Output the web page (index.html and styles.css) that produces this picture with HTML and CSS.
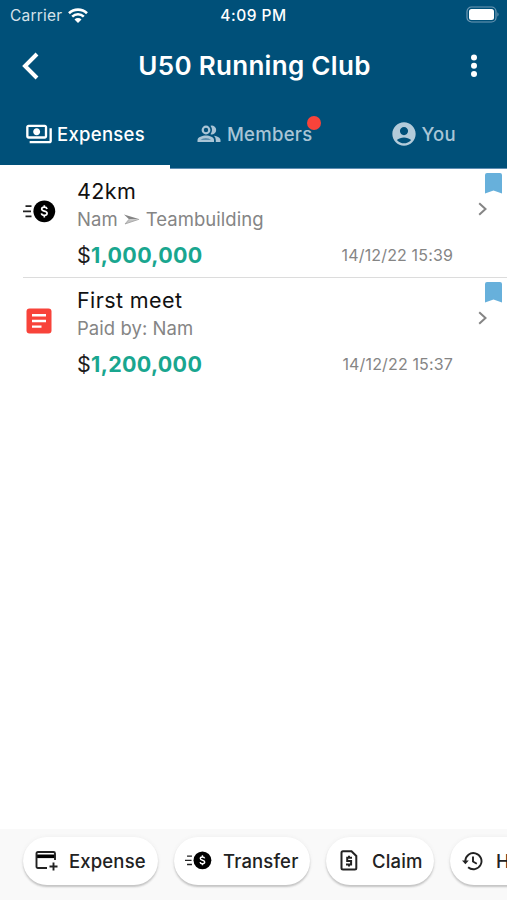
FILE: index.html
```html
<!DOCTYPE html>
<html lang="en">
<head>
  <meta charset="UTF-8">
  <meta name="viewport" content="width=device-width, initial-scale=1">
  <title>U50 Running Club</title>
  <link rel="stylesheet" href="styles.css">
</head>
<body>

  <!-- shared icons -->
  <svg class="defs" width="0" height="0">
    <symbol id="transfer" viewBox="0 0 33 23">
      <path d="M2.5 6.2h6M0 11.3h8M2.5 16.4h6" fill="none" stroke="#222" stroke-width="1.7"/>
      <circle cx="21.3" cy="11.3" r="10.9" fill="#000"/>
      <path d="M24.1 8.9c-.4-1.2-1.4-1.7-2.8-1.7-1.5 0-2.6.7-2.6 1.9 0 2.9 5.4 1.2 5.4 4.2 0 1.300-1.200 2.100-2.800 2.100s-2.600-.7-2.900-2M21.300 5.200v2M21.300 15.400v2" fill="none" stroke="#fff" stroke-width="1.7"/>
    </symbol>
    <symbol id="bookmark" viewBox="0 0 17 21">
      <path d="M2 0h13q2 0 2 2v18.500l-8.500-3L0 20.500V2q0-2 2-2z" fill="#67b0db"/>
    </symbol>
    <symbol id="chevron" viewBox="0 0 9 14">
      <path d="M1.200 1.200L7.500 7l-6.300 5.800" fill="none" stroke="#858585" stroke-width="2"/>
    </symbol>
  </svg>

  <header>
    <div class="status">
      <div class="carrier">Carrier
        <svg width="20" height="15" viewBox="0 0 20 15" fill="none" stroke="#fff" stroke-width="2.6">
          <path d="M1 5.200a13 13 0 0 1 18 0M4.200 8.600a8.400 8.400 0 0 1 11.600 0"/>
          <path d="M10 15l-3.500-3.600a5 5 0 0 1 7 0z" fill="#fff" stroke="none"/>
        </svg>
      </div>
      <div class="clock">4:09 PM</div>
      <svg class="battery" width="34" height="17" viewBox="0 0 34 17">
        <rect x="1" y="1" width="29" height="15" rx="4.5" fill="none" stroke="#6f9ab5" stroke-width="1.2"/>
        <rect x="3" y="3" width="25" height="11" rx="2.5" fill="#fff"/>
        <path d="M31.500 6.300q2 2.200 0 4.400z" fill="#7fa5bd"/>
      </svg>
    </div>
    <div class="title">
      <svg width="17" height="28" viewBox="0 0 17 28"><path d="M15 2L3 14l12 12" fill="none" stroke="#fff" stroke-width="4"/></svg>
      <h1>U50 Running Club</h1>
      <svg width="8" height="24" viewBox="0 0 8 24" fill="#fff"><circle cx="4" cy="3.500" r="3"/><circle cx="4" cy="11.700" r="3"/><circle cx="4" cy="19.900" r="3"/></svg>
    </div>
    <nav>
      <div class="tab active">
        <svg width="28" height="28" viewBox="0 0 24 24" fill="#fff"><path d="M19 14V6c0-1.100-.9-2-2-2H3c-1.100 0-2 .9-2 2v8c0 1.100.9 2 2 2h14c1.100 0 2-.9 2-2zm-2 0H3V6h14v8zm-7-7c-1.660 0-3 1.340-3 3s1.340 3 3 3 3-1.340 3-3-1.340-3-3-3zm13 0v11c0 1.100-.9 2-2 2H4v-2h17V7h2z"/></svg>
        <span>Expenses</span>
      </div>
      <div class="tab members">
        <svg width="24" height="18" viewBox="0 0 24 18" fill="#a9c5d6">
          <circle cx="9" cy="5" r="3.300" fill="none" stroke="#a9c5d6" stroke-width="2.200"/>
          <path d="M13.500.8a4.400 4.400 0 1 1 0 8.400q3-4.200 0-8.400z"/>
          <path d="M.5 17v-2c0-3 5-4.500 8.500-4.500s8 1.500 8 4.500v2z"/>
          <path d="M17 10.800c3.200.6 6.500 2 6.500 4.200v2h-4.700v-2q0-2.500-1.800-4.200z"/>
          <path d="M3.500 15q2-2 5.300-2t5.200 2z" fill="#5d90ae"/>
        </svg>
        <span>Members<i class="dot"></i></span>
      </div>
      <div class="tab you">
        <svg width="28" height="28" viewBox="0 0 24 24" fill="#b3cbda"><path d="M12 2C6.480 2 2 6.480 2 12s4.480 10 10 10 10-4.480 10-10S17.520 2 12 2zm0 4c1.930 0 3.500 1.570 3.500 3.500S13.930 13 12 13s-3.500-1.570-3.500-3.500S10.070 6 12 6zm0 14c-2.030 0-4.430-.82-6.140-2.880C7.550 15.800 9.680 15 12 15s4.450.8 6.140 2.120C16.430 19.180 14.030 20 12 20z"/></svg>
        <span>You</span>
      </div>
    </nav>
  </header>

  <main>
    <div class="item">
      <svg class="kind" width="33" height="23"><use href="#transfer"/></svg>
      <div class="info">
        <h2>42km</h2>
        <p>Nam <svg width="16" height="11" viewBox="0 0 16 11"><path d="M0 .5l15.500 4.800H5z" fill="#858585"/><path d="M5 5.300h10.500L1 10z" fill="#c4c4c4"/><path d="M5 5.300L1 10l14-4.700" fill="none" stroke="#999" stroke-width=".7"/></svg> Teambuilding</p>
        <div class="money">
          <div class="amount">$<b>1,000,000</b></div>
          <time>14/12/22 15:39</time>
        </div>
      </div>
      <svg class="chevron" width="9" height="14"><use href="#chevron"/></svg>
      <svg class="bookmark" width="17" height="21"><use href="#bookmark"/></svg>
    </div>
    <div class="item">
      <svg class="kind bill" width="26" height="26" viewBox="0 0 26 26">
        <rect x=".5" y=".5" width="25" height="25" rx="3" fill="#f8433a"/>
        <path d="M6 7.300h14M6 13h14M6 18.600h9.500" stroke="#fff" stroke-width="2.400"/>
      </svg>
      <div class="info">
        <h2>First meet</h2>
        <p>Paid by: Nam</p>
        <div class="money">
          <div class="amount">$<b>1,200,000</b></div>
          <time>14/12/22 15:37</time>
        </div>
      </div>
      <svg class="chevron" width="9" height="14"><use href="#chevron"/></svg>
      <svg class="bookmark" width="17" height="21"><use href="#bookmark"/></svg>
    </div>
  </main>

  <footer>
    <button class="expense">
      <svg width="23" height="20" viewBox="0 0 23 20" fill="none" stroke="#222" stroke-width="1.9">
        <path d="M1 5.300h19" stroke="#000" stroke-width="3.600"/>
        <path d="M12 17H3q-1.500 0-1.500-1.500v-13Q1.500 1 3 1h15.500Q20 1 20 2.500V9"/>
        <path d="M18.500 11.500v8M14.500 15.500h8"/>
      </svg>
      <span>Expense</span>
    </button>
    <button class="transfer">
      <svg width="27" height="19"><use href="#transfer"/></svg>
      <span>Transfer</span>
    </button>
    <button class="claim">
      <svg width="18" height="21" viewBox="0 0 18 21" fill="none" stroke="#222" stroke-width="2">
        <path d="M3 1.200h8.500L16.300 6v12q0 1.500-1.500 1.500H3q-1.500 0-1.500-1.500V2.700q0-1.500 1.500-1.500z"/>
        <path d="M12 7.800H7.200v3.300h3.900v3.300H6M9 5.800v2M9 14.400v2"/>
      </svg>
      <span>Claim</span>
    </button>
    <button class="history">
      <svg width="21" height="20" viewBox="0 0 21 20" fill="none" stroke="#222" stroke-width="1.9">
        <path d="M3.300 10a8.100 8.100 0 1 1 2.800 6.300M11 5.500v5l3.800 2.200"/>
        <path d="M0 9.500h6.800l-3.400 3.800z" fill="#222" stroke="none"/>
      </svg>
      <span>History</span>
    </button>
  </footer>

</body>
</html>
```
FILE: styles.css
```css
* {
  box-sizing: border-box;
}
body {
  margin: 0;
  height: 900px;
  display: flex;
  flex-direction: column;
  overflow: hidden;
  background-color: #fff;
  color: #1c1c1c;
  font-family: Inter, sans-serif;
}
svg {
  display: block;
  flex: none;
}
.defs {
  position: absolute;
}
h1, h2, p {
  margin: 0;
}

/* header */
header {
  height: 169px;
  background-color: #005079;
  border-bottom: 1px solid #5f8eb3;
  color: #fff;
}
.status {
  height: 30px;
  padding: 0 7px 0 10px;
  display: grid;
  grid-template-columns: 1fr auto 1fr;
  align-items: center;
  font-size: 15.5px;
}
.carrier {
  display: flex;
  align-items: center;
  gap: 6px;
  color: #d5e2ea;
  letter-spacing: 0.2px;
}
.clock {
  margin-right: 3px;
  font-weight: 500;
  letter-spacing: 0.5px;
}
.battery {
  justify-self: end;
  margin-top: -2px;
}
.title {
  height: 72px;
  padding: 0 29px 0 22px;
  display: flex;
  align-items: center;
  justify-content: space-between;
}
h1 {
  font-size: 26px;
  font-weight: 600;
  letter-spacing: 0.3px;
  margin-top: -2px;
}
nav {
  height: 67px;
  display: grid;
  grid-template-columns: 170px 1fr 1fr;
}
.tab {
  display: flex;
  align-items: center;
  justify-content: center;
  gap: 4px;
  padding-bottom: 4px;
  font-size: 18.5px;
  font-weight: 500;
  letter-spacing: 0.3px;
  color: #a9c5d6;
}
.active {
  color: #fff;
  border-bottom: 4px solid #fff;
  padding-bottom: 0;
}
.members {
  gap: 6px;
  padding-left: 1px;
}
.members span {
  position: relative;
}
.dot {
  position: absolute;
  top: -7px;
  right: -8px;
  width: 14px;
  height: 14px;
  border-radius: 50%;
  background-color: #f8433a;
}

/* expense list */
main {
  flex: 1;
}
.item {
  position: relative;
  height: 109px;
  margin-left: 23px;
  display: flex;
  border-bottom: 1px solid #dcdcdc;
}
.item:last-child {
  border-bottom: none;
}
.kind {
  margin-top: 31px;
}
.bill {
  margin: 30px 4px 0 3px;
}
.info {
  width: 376px;
  margin-left: 21px;
  padding-top: 8px;
}
h2 {
  font-size: 21.5px;
  line-height: 28px;
  font-weight: 400;
  letter-spacing: 0.4px;
  color: #111;
}
.info p {
  display: flex;
  align-items: center;
  gap: 6px;
  font-size: 18.5px;
  line-height: 28px;
  letter-spacing: 0.05px;
  color: #858585;
}
.money {
  margin-top: 6px;
  display: flex;
  align-items: center;
  justify-content: space-between;
}
.amount {
  font-size: 21.5px;
  line-height: 32px;
  letter-spacing: 0.3px;
}
.amount b {
  font-weight: 700;
  color: #19a68f;
}
time {
  font-size: 16px;
  letter-spacing: 0.15px;
  color: #858585;
}
.chevron {
  margin: 33px 0 0 25px;
}
.bookmark {
  position: absolute;
  top: 4px;
  right: 5px;
}

/* action buttons */
footer {
  height: 71px;
  padding: 8px 0 0 23px;
  display: flex;
  gap: 16px;
  overflow: hidden;
  background-color: #f9f9f9;
}
button {
  flex: none;
  height: 48px;
  padding: 0 0 1px 12px;
  display: flex;
  align-items: center;
  gap: 11px;
  border: none;
  border-radius: 24px;
  background-color: #fff;
  box-shadow: 0 2px 2px #c4c4c4, 0 0 4px #eee;
  font-family: inherit;
  font-size: 18.5px;
  font-weight: 500;
  letter-spacing: 0.15px;
  color: #222;
}
.expense {
  width: 135px;
}
.transfer {
  width: 136px;
  padding-left: 11px;
}
.claim {
  width: 108px;
  padding-left: 14px;
  gap: 14px;
}
.history {
  width: 136px;
  gap: 13px;
}
```
